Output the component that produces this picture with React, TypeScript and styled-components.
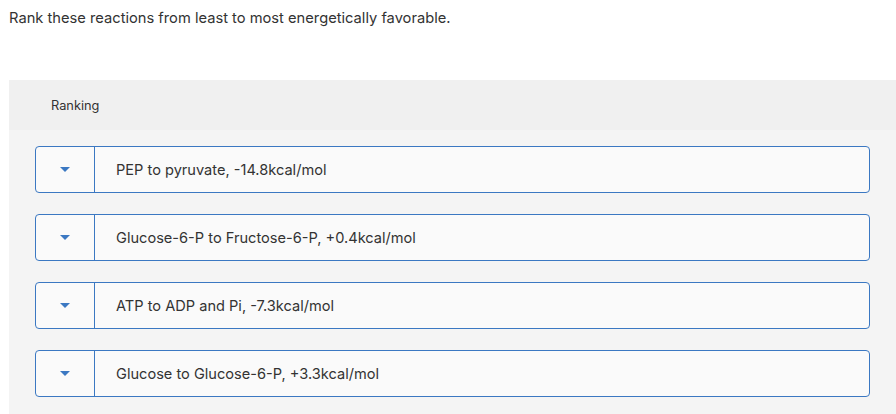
import React from 'react';
import styled, { createGlobalStyle } from 'styled-components';

const GlobalStyle = createGlobalStyle`
    html, body {
        margin: 0;
        padding: 0;
        background: #ffffff;
    }
    body {
        font-family: Inter, Roboto, "Liberation Sans", sans-serif;
        color: #333333;
    }
`

const Page = styled.div`
    width: 896px;
    height: 414px;
    overflow: hidden;
    box-sizing: border-box;
    padding: 8px 0 0 9px;
`

const Prompt = styled.p`
    margin: 0;
    font-size: 14.7px;
    line-height: 20px;
    color: #333333;
`

const Panel = styled.section`
    margin-top: 52px;
    background: #f4f4f4;
    min-height: 340px;
`

const PanelHeader = styled.div`
    height: 50px;
    background: #f0f0f0;
    display: flex;
    align-items: center;
    padding-left: 42px;
    font-size: 12.8px;
    color: #333333;
`

const List = styled.ul`
    list-style: none;
    margin: 0;
    padding: 16px 26px 0 26px;
    display: flex;
    flex-direction: column;
    gap: 21px;
`

const Row = styled.li`
    display: flex;
    height: 47px;
    box-sizing: border-box;
    border: 1px solid #3b78c2;
    border-radius: 4px;
    background: #fafafa;
`

const Toggle = styled.button`
    width: 59px;
    flex: none;
    box-sizing: border-box;
    border: none;
    border-right: 1px solid #3b78c2;
    background: transparent;
    padding: 0;
    display: flex;
    align-items: center;
    justify-content: center;
    cursor: pointer;
`

const Label = styled.span`
    display: flex;
    align-items: center;
    padding-left: 21px;
    font-size: 14.6px;
    color: #333333;
`

function Caret() {
    return (
        <svg width="10" height="5" viewBox="0 0 10 5">
            <path d="M0 0 L10 0 L5 5 Z" fill="#3b78c2" />
        </svg>
    );
}

const reactions = [
    'PEP to pyruvate, -14.8kcal/mol',
    'Glucose-6-P to Fructose-6-P, +0.4kcal/mol',
    'ATP to ADP and Pi, -7.3kcal/mol',
    'Glucose to Glucose-6-P, +3.3kcal/mol'
];

function App() {
    return (
        <>
            <GlobalStyle />
            <Page>
                <Prompt>Rank these reactions from least to most energetically favorable.</Prompt>
                <Panel>
                    <PanelHeader>Ranking</PanelHeader>
                    <List>
                        {reactions.map((r) => (
                            <Row key={r}>
                                <Toggle aria-label="Move"><Caret /></Toggle>
                                <Label>{r}</Label>
                            </Row>
                        ))}
                    </List>
                </Panel>
            </Page>
        </>
    );
}

export default App;
